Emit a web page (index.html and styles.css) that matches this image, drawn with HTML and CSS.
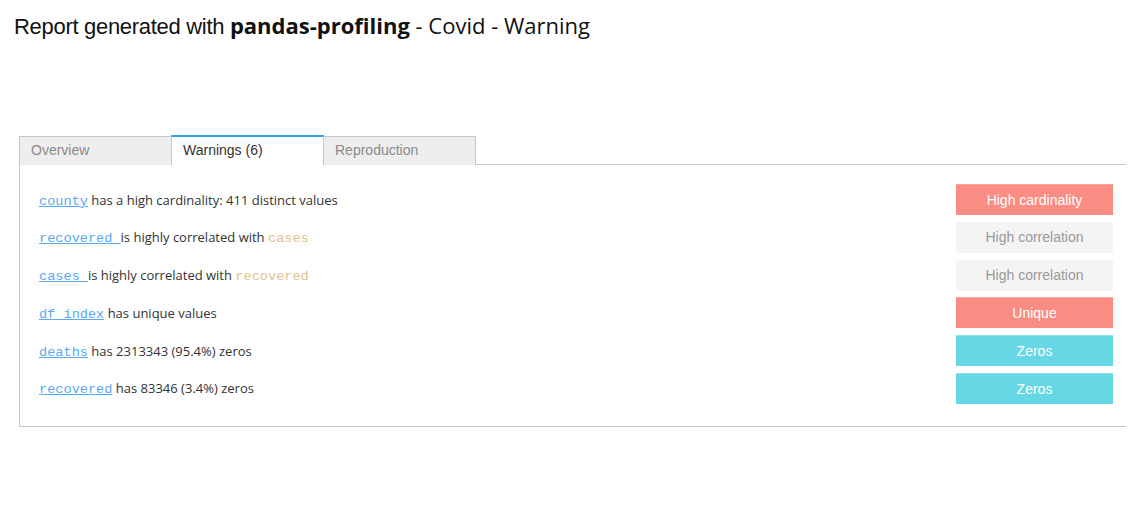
FILE: index.html
```html
<!DOCTYPE html>
<html lang="en">
<head>
<meta charset="utf-8">
<title>Report generated with pandas-profiling - Covid - Warning</title>
<link rel="stylesheet" href="styles.css">
</head>
<body>
<h1 class="title"><span class="title-lead">Report generated with</span> <b class="title-brand">pandas-profiling</b> - Covid - Warning</h1>
<div class="report">
  <ul class="tabs">
    <li class="tab">Overview</li>
    <li class="tab tab-active">Warnings (6)</li>
    <li class="tab">Reproduction</li>
  </ul>
  <div class="panel">
    <div class="row">
      <div class="msg"><a class="var" href="#">county</a> has a high cardinality: 411 distinct values</div>
      <span class="badge badge-red">High cardinality</span>
    </div>
    <div class="row">
      <div class="msg"><a class="var" href="#">recovered </a>is highly correlated with <code class="ref">cases</code></div>
      <span class="badge badge-gray">High correlation</span>
    </div>
    <div class="row">
      <div class="msg"><a class="var" href="#">cases </a>is highly correlated with <code class="ref">recovered</code></div>
      <span class="badge badge-gray">High correlation</span>
    </div>
    <div class="row">
      <div class="msg"><a class="var" href="#">df_index</a> has unique values</div>
      <span class="badge badge-red">Unique</span>
    </div>
    <div class="row">
      <div class="msg"><a class="var" href="#">deaths</a> has 2313343 (95.4%) zeros</div>
      <span class="badge badge-cyan">Zeros</span>
    </div>
    <div class="row">
      <div class="msg"><a class="var" href="#">recovered</a> has 83346 (3.4%) zeros</div>
      <span class="badge badge-cyan">Zeros</span>
    </div>
  </div>
</div>
</body>
</html>
```
FILE: styles.css
```css
body {
  margin: 0;
  background: #ffffff;
  color: #222;
  font-family: "Open Sans", "Noto Sans", sans-serif;
}
.title {
  margin: 0;
  padding: 9px 0 0 14px;
  font-size: 22px;
  font-weight: 400;
  line-height: 32px;
  color: #111;
  font-family: "Open Sans", "Noto Sans", sans-serif;
}
.title-lead {
  font-family: "Liberation Sans Narrow", "Liberation Sans", sans-serif;
  font-stretch: condensed;
  letter-spacing: -0.3px;
}
.title-brand {
  font-weight: 700;
}
.report {
  margin: 92px 0 0 19px;
  width: 1107px;
}
.tabs {
  display: flex;
  margin: 0;
  padding: 0;
  list-style: none;
  border-bottom: 1px solid #c8c8c8;
  height: 29px;
}
.tab {
  box-sizing: border-box;
  width: 153px;
  height: 29px;
  padding: 5px 0 0 11px;
  background: #eeeeee;
  border: 1px solid #c8c8c8;
  border-bottom: none;
  color: #8a8a8a;
  font-family: "Liberation Sans", Arial, sans-serif;
  font-size: 14px;
  margin-top: 1px;
}
.tab + .tab {
  margin-left: -1px;
}
.tab-active {
  background: #fff;
  color: #333;
  border-top: 2px solid #3a9be6;
  margin-top: 0;
  height: 30px;
  position: relative;
  z-index: 1;
  padding-top: 5px;
}
.panel {
  border-left: 1px solid #c4c4c4;
  border-bottom: 1px solid #c4c4c4;
  padding: 19px 13px 22px 19px;
  display: flex;
  flex-direction: column;
  gap: 6.8px;
}
.row {
  display: flex;
  align-items: center;
  justify-content: space-between;
  height: 31px;
}
.msg {
  font-size: 13px;
  color: #333;
}
.var {
  font-family: "Liberation Mono", "Courier New", monospace;
  font-size: 13.6px;
  color: #5aa8f4;
  text-decoration: underline;
}
.ref {
  font-family: "Liberation Mono", "Courier New", monospace;
  font-size: 13.6px;
  color: #dfc18d;
}
.badge {
  box-sizing: border-box;
  width: 157px;
  height: 31px;
  display: flex;
  align-items: center;
  justify-content: center;
  font-family: "Liberation Sans", Arial, sans-serif;
  font-size: 14px;
  color: #fff;
}
.badge-red {
  background: #f98d84;
  border-top: 1px solid #fba59e;
}
.badge-gray {
  background: #f4f4f4;
  color: #999;
}
.badge-cyan {
  background: #66d7e4;
  border-top: 1px solid #8fe2ec;
}
```
